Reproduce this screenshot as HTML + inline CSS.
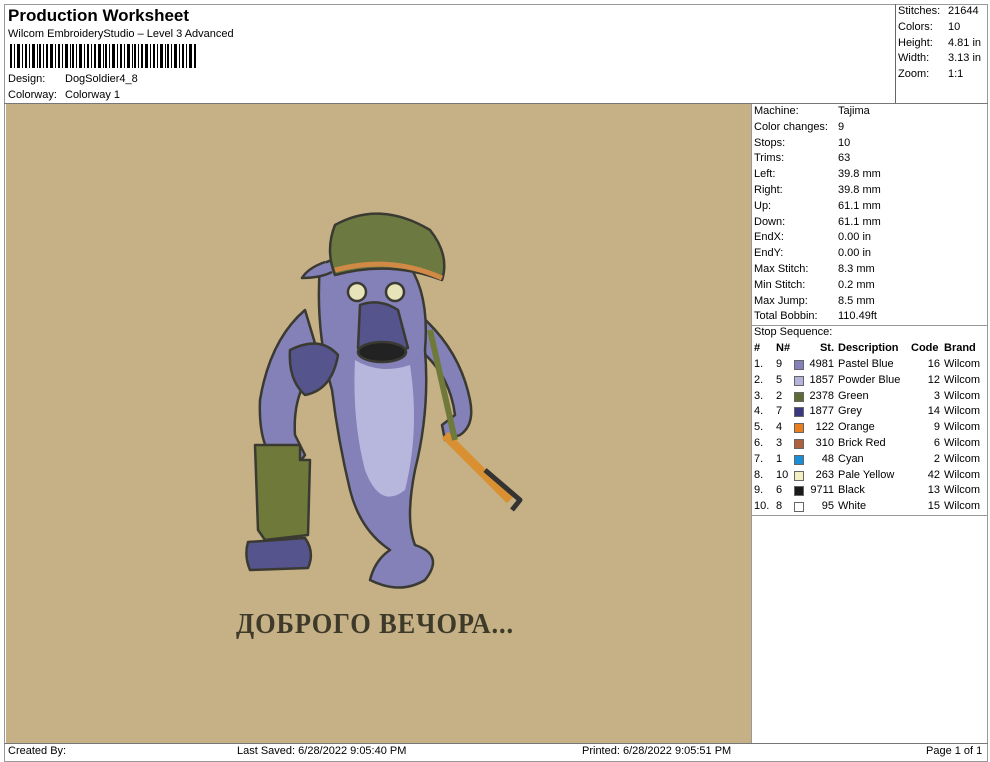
<!DOCTYPE html>
<html><head><meta charset="utf-8"><style>
*{margin:0;padding:0;box-sizing:border-box}
body{width:990px;height:762px;background:#fff;font-family:"Liberation Sans",Arial,sans-serif;color:#000;position:relative;overflow:hidden;font-size:11px}
.a{position:absolute;white-space:nowrap}
.t{font-size:11px;line-height:15.8px}
</style></head><body>
<div class="a" style="left:4px;top:4px;width:984px;height:758px;border:1px solid #999"></div>
<div class="a" style="left:8px;top:6px;font-size:17px;font-weight:bold">Production Worksheet</div>
<div class="a" style="left:8px;top:28px;font-size:11px">Wilcom EmbroideryStudio – Level 3 Advanced</div>
<svg class="a" style="left:10px;top:44px" width="186" height="24">
<g fill="#000">
<rect x="0" width="2" height="24"/><rect x="4" width="1" height="24"/><rect x="7" width="3" height="24"/><rect x="12" width="1" height="24"/><rect x="15" width="2" height="24"/><rect x="19" width="1" height="24"/><rect x="22" width="3" height="24"/><rect x="27" width="1" height="24"/><rect x="29" width="2" height="24"/><rect x="33" width="1" height="24"/><rect x="36" width="2" height="24"/><rect x="40" width="3" height="24"/><rect x="45" width="1" height="24"/><rect x="48" width="2" height="24"/><rect x="52" width="1" height="24"/><rect x="55" width="3" height="24"/><rect x="60" width="1" height="24"/><rect x="62" width="2" height="24"/><rect x="66" width="1" height="24"/><rect x="69" width="3" height="24"/><rect x="74" width="1" height="24"/><rect x="77" width="2" height="24"/><rect x="81" width="1" height="24"/><rect x="84" width="2" height="24"/><rect x="88" width="3" height="24"/><rect x="93" width="1" height="24"/><rect x="95" width="2" height="24"/><rect x="99" width="1" height="24"/><rect x="102" width="3" height="24"/><rect x="107" width="1" height="24"/><rect x="110" width="2" height="24"/><rect x="114" width="1" height="24"/><rect x="117" width="3" height="24"/><rect x="122" width="1" height="24"/><rect x="124" width="2" height="24"/><rect x="128" width="1" height="24"/><rect x="131" width="2" height="24"/><rect x="135" width="3" height="24"/><rect x="140" width="1" height="24"/><rect x="143" width="2" height="24"/><rect x="147" width="1" height="24"/><rect x="150" width="3" height="24"/><rect x="155" width="1" height="24"/><rect x="157" width="2" height="24"/><rect x="161" width="1" height="24"/><rect x="164" width="3" height="24"/><rect x="169" width="1" height="24"/><rect x="172" width="2" height="24"/><rect x="176" width="1" height="24"/><rect x="179" width="3" height="24"/><rect x="184" width="2" height="24"/>
</g></svg>
<div class="a" style="left:8px;top:73px">Design:</div><div class="a" style="left:65px;top:73px">DogSoldier4_8</div>
<div class="a" style="left:8px;top:89px">Colorway:</div><div class="a" style="left:65px;top:89px">Colorway 1</div>
<div class="a" style="left:895px;top:4px;width:93px;height:100px;border-left:1px solid #666;border-bottom:1px solid #666"></div>
<div class="a t" style="left:898px;top:4px">Stitches:<br>Colors:<br>Height:<br>Width:<br>Zoom:</div>
<div class="a t" style="left:948px;top:4px">21644<br>10<br>4.81 in<br>3.13 in<br>1:1</div>
<div class="a" style="left:4px;top:103px;width:984px;height:1px;background:#777"></div>
<div class="a" style="left:6px;top:104px;width:745px;height:639px;background:#c6b186"></div>
<svg class="a" style="left:220px;top:200px" width="320" height="450" viewBox="0 0 320 450">
<g stroke="#3a3a32" stroke-width="2.5" stroke-linejoin="round">
<path d="M200 115 Q240 150 250 200 Q255 225 240 235 L225 240 L222 225 L235 215 Q230 175 200 150 Z" fill="#8381b8"/>
<path d="M85 110 Q50 140 40 200 Q38 250 60 265 Q75 270 85 255 L75 235 Q72 190 100 160 Z" fill="#8381b8"/>
<path d="M100 65 Q140 45 185 60 Q210 90 205 150 Q210 210 195 270 Q185 320 195 345 Q225 355 205 380 Q180 395 150 380 Q155 360 170 350 Q140 330 130 290 Q118 240 112 190 Q95 130 100 65 Z" fill="#8381b8"/>
<path d="M135 160 Q160 175 190 165 Q200 230 185 290 Q160 310 145 270 Q132 220 135 160 Z" fill="#b7b6dc" stroke="none"/>
<path d="M35 245 L80 245 L80 260 L90 260 L88 335 L45 340 L38 330 Z" fill="#6f7a3a"/>
<path d="M28 342 L85 338 Q95 352 88 368 L30 370 Q24 356 28 342 Z" fill="#55548c"/>
<path d="M70 150 Q100 135 118 155 Q112 190 85 195 Q68 180 70 150 Z" fill="#55548c"/>
<path d="M225 235 L290 300" stroke="#d99032" stroke-width="9"/>
<path d="M265 270 L300 300 L292 310" fill="none" stroke="#333" stroke-width="5"/>
<path d="M210 130 L235 240" stroke="#6f7a3a" stroke-width="6"/>
<path d="M115 25 Q160 0 210 30 Q230 55 222 80 Q170 60 115 75 Q105 50 115 25 Z" fill="#6c7940"/>
<path d="M115 70 Q170 55 222 78" fill="none" stroke="#d08a45" stroke-width="5"/>
<path d="M105 62 Q88 68 82 78 Q100 78 112 72" fill="#8381b8"/>
<circle cx="137" cy="92" r="9" fill="#e6e4b8"/><circle cx="175" cy="92" r="9" fill="#e6e4b8"/>
<path d="M140 105 Q160 98 178 110 L188 148 Q160 158 138 148 Z" fill="#55548c"/>
<ellipse cx="162" cy="152" rx="24" ry="10" fill="#222"/>
</g></svg>
<div class="a" style="left:236px;top:608px;font-family:'Liberation Serif',serif;font-weight:bold;font-size:29px;color:#3e3a2a;letter-spacing:1px;transform:scaleX(0.91);transform-origin:left">ДОБРОГО ВЕЧОРА...</div>
<div class="a" style="left:751px;top:104px;width:1px;height:639px;background:#999"></div>
<div class="a t" style="left:754px;top:104px">Machine:<br>Color changes:<br>Stops:<br>Trims:<br>Left:<br>Right:<br>Up:<br>Down:<br>EndX:<br>EndY:<br>Max Stitch:<br>Min Stitch:<br>Max Jump:<br>Total Bobbin:</div>
<div class="a t" style="left:838px;top:104px">Tajima<br>9<br>10<br>63<br>39.8 mm<br>39.8 mm<br>61.1 mm<br>61.1 mm<br>0.00 in<br>0.00 in<br>8.3 mm<br>0.2 mm<br>8.5 mm<br>110.49ft</div>
<div class="a" style="left:752px;top:325px;width:236px;height:1px;background:#999"></div>
<div class="a t" style="left:754px;top:325px">Stop Sequence:</div>
<div class="a" style="left:754px;top:341px;width:232px;font-size:11px;line-height:15.8px">
<div style="position:relative;font-weight:bold;text-decoration:underline;height:15.8px"><span class="a" style="left:0">#</span><span class="a" style="left:22px">N#</span><span class="a" style="left:54px;width:26px;text-align:right">St.</span><span class="a" style="left:84px">Description</span><span class="a" style="left:157px">Code</span><span class="a" style="left:190px">Brand</span></div>
</div>
<div class="a" style="left:754px;top:357px;width:234px;font-size:11px;line-height:15.8px">
<div style="position:relative;height:15.8px"><span class="a">1.</span><span class="a" style="left:22px">9</span><span class="a" style="left:40px;top:3px;width:10px;height:10px;background:#8480b8;border:1px solid #666"></span><span class="a" style="left:50px;width:30px;text-align:right">4981</span><span class="a" style="left:84px">Pastel Blue</span><span class="a" style="left:160px;width:26px;text-align:right">16</span><span class="a" style="left:190px">Wilcom</span></div>
<div style="position:relative;height:15.8px"><span class="a">2.</span><span class="a" style="left:22px">5</span><span class="a" style="left:40px;top:3px;width:10px;height:10px;background:#b5b3d9;border:1px solid #666"></span><span class="a" style="left:50px;width:30px;text-align:right">1857</span><span class="a" style="left:84px">Powder Blue</span><span class="a" style="left:160px;width:26px;text-align:right">12</span><span class="a" style="left:190px">Wilcom</span></div>
<div style="position:relative;height:15.8px"><span class="a">3.</span><span class="a" style="left:22px">2</span><span class="a" style="left:40px;top:3px;width:10px;height:10px;background:#5e6b35;border:1px solid #666"></span><span class="a" style="left:50px;width:30px;text-align:right">2378</span><span class="a" style="left:84px">Green</span><span class="a" style="left:160px;width:26px;text-align:right">3</span><span class="a" style="left:190px">Wilcom</span></div>
<div style="position:relative;height:15.8px"><span class="a">4.</span><span class="a" style="left:22px">7</span><span class="a" style="left:40px;top:3px;width:10px;height:10px;background:#3c3880;border:1px solid #666"></span><span class="a" style="left:50px;width:30px;text-align:right">1877</span><span class="a" style="left:84px">Grey</span><span class="a" style="left:160px;width:26px;text-align:right">14</span><span class="a" style="left:190px">Wilcom</span></div>
<div style="position:relative;height:15.8px"><span class="a">5.</span><span class="a" style="left:22px">4</span><span class="a" style="left:40px;top:3px;width:10px;height:10px;background:#e87e1e;border:1px solid #666"></span><span class="a" style="left:50px;width:30px;text-align:right">122</span><span class="a" style="left:84px">Orange</span><span class="a" style="left:160px;width:26px;text-align:right">9</span><span class="a" style="left:190px">Wilcom</span></div>
<div style="position:relative;height:15.8px"><span class="a">6.</span><span class="a" style="left:22px">3</span><span class="a" style="left:40px;top:3px;width:10px;height:10px;background:#b0603e;border:1px solid #666"></span><span class="a" style="left:50px;width:30px;text-align:right">310</span><span class="a" style="left:84px">Brick Red</span><span class="a" style="left:160px;width:26px;text-align:right">6</span><span class="a" style="left:190px">Wilcom</span></div>
<div style="position:relative;height:15.8px"><span class="a">7.</span><span class="a" style="left:22px">1</span><span class="a" style="left:40px;top:3px;width:10px;height:10px;background:#1a8fd8;border:1px solid #666"></span><span class="a" style="left:50px;width:30px;text-align:right">48</span><span class="a" style="left:84px">Cyan</span><span class="a" style="left:160px;width:26px;text-align:right">2</span><span class="a" style="left:190px">Wilcom</span></div>
<div style="position:relative;height:15.8px"><span class="a">8.</span><span class="a" style="left:22px">10</span><span class="a" style="left:40px;top:3px;width:10px;height:10px;background:#f3f1c4;border:1px solid #666"></span><span class="a" style="left:50px;width:30px;text-align:right">263</span><span class="a" style="left:84px">Pale Yellow</span><span class="a" style="left:160px;width:26px;text-align:right">42</span><span class="a" style="left:190px">Wilcom</span></div>
<div style="position:relative;height:15.8px"><span class="a">9.</span><span class="a" style="left:22px">6</span><span class="a" style="left:40px;top:3px;width:10px;height:10px;background:#1a1a1a;border:1px solid #666"></span><span class="a" style="left:50px;width:30px;text-align:right">9711</span><span class="a" style="left:84px">Black</span><span class="a" style="left:160px;width:26px;text-align:right">13</span><span class="a" style="left:190px">Wilcom</span></div>
<div style="position:relative;height:15.8px"><span class="a">10.</span><span class="a" style="left:22px">8</span><span class="a" style="left:40px;top:3px;width:10px;height:10px;background:#fff;border:1px solid #666"></span><span class="a" style="left:50px;width:30px;text-align:right">95</span><span class="a" style="left:84px">White</span><span class="a" style="left:160px;width:26px;text-align:right">15</span><span class="a" style="left:190px">Wilcom</span></div>
</div>
<div class="a" style="left:752px;top:515px;width:236px;height:1px;background:#999"></div>
<div class="a" style="left:4px;top:743px;width:984px;height:1px;background:#777"></div>
<div class="a" style="left:8px;top:745px">Created By:</div>
<div class="a" style="left:237px;top:745px">Last Saved: 6/28/2022 9:05:40 PM</div>
<div class="a" style="left:582px;top:745px">Printed: 6/28/2022 9:05:51 PM</div>
<div class="a" style="left:926px;top:745px">Page 1 of 1</div>
</body></html>
